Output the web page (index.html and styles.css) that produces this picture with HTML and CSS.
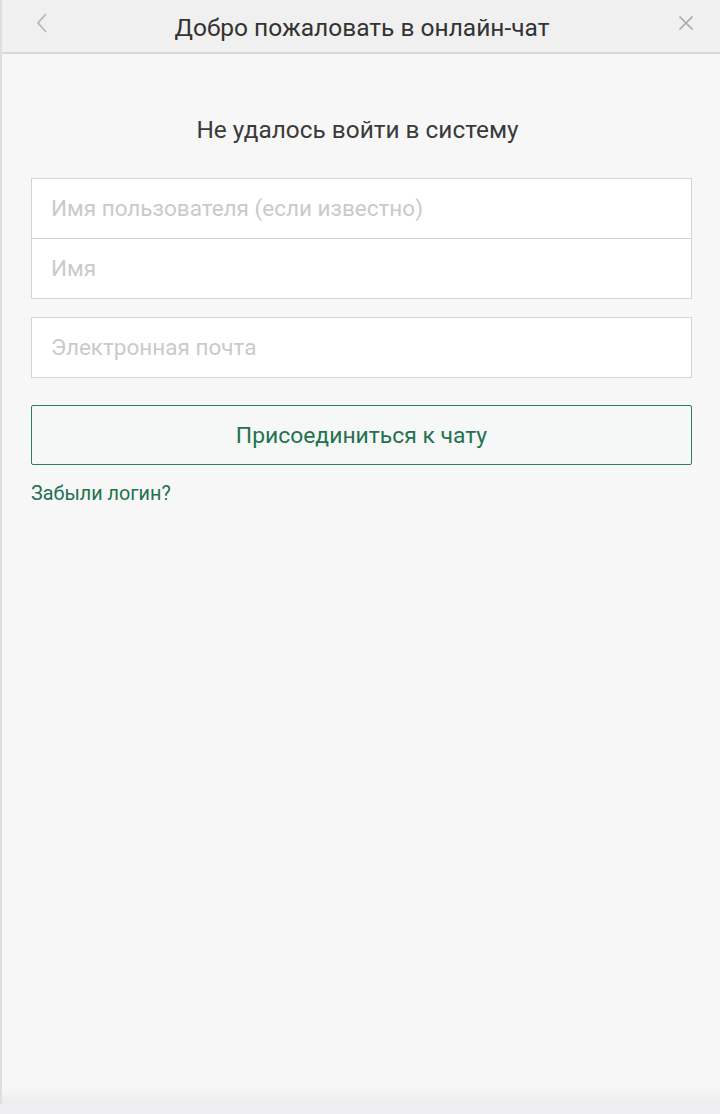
FILE: index.html
```html
<!DOCTYPE html>
<html lang="ru">
<head>
<meta charset="utf-8">
<link rel="stylesheet" href="styles.css">
</head>
<body>
<div class="app">
  <header class="header">
    <button class="icon-btn back" aria-label="Назад">
      <svg width="14" height="22" viewBox="0 0 14 22"><path d="M11 2 L3 11 L11 20" fill="none" stroke="#b5b5b5" stroke-width="1.6"/></svg>
    </button>
    <h1 class="title">Добро пожаловать в онлайн-чат</h1>
    <button class="icon-btn close" aria-label="Закрыть">
      <svg width="16" height="16" viewBox="0 0 16 16"><path d="M1.5 1.5 L14.5 14.5 M14.5 1.5 L1.5 14.5" fill="none" stroke="#a8a8a8" stroke-width="1.6"/></svg>
    </button>
  </header>
  <main class="main">
    <h2 class="subtitle">Не удалось войти в систему</h2>
    <div class="group first">
      <div class="field">Имя пользователя (если известно)</div>
      <div class="field joined">Имя</div>
    </div>
    <div class="group">
      <div class="field">Электронная почта</div>
    </div>
    <button class="join">Присоединиться к чату</button>
    <a class="forgot" href="#">Забыли логин?</a>
  </main>
  <div class="fade"></div>
</div>
<div class="strip"></div>
</body>
</html>
```
FILE: styles.css
```css
html, body {
  margin: 0;
  padding: 0;
  height: 1114px;
  overflow: hidden;
  background: #eeeef2;
  font-family: Roboto, "Noto Sans", sans-serif;
}
.app {
  height: 1104px;
  display: flex;
  flex-direction: column;
  background: #f7f7f7;
  border-left: 2px solid #dedede;
  box-sizing: border-box;
}
.header {
  height: 54px;
  flex: none;
  box-sizing: border-box;
  background: #f0f0f0;
  border-bottom: 2px solid #d9d9d9;
  display: flex;
  align-items: center;
  justify-content: space-between;
  padding: 0 24px 0 30px;
}
.icon-btn {
  background: none;
  border: 0;
  padding: 0;
  width: 20px;
  height: 24px;
  display: flex;
  align-items: center;
  justify-content: center;
  margin-top: -6px;
}
.title {
  margin: 0 4px 0 0;
  font-size: 24.5px;
  font-weight: 400;
  color: #333;
  margin-top: 2px;
}
.main {
  flex: 1;
  padding: 0 28px 0 29px;
  display: flex;
  flex-direction: column;
}
.subtitle {
  margin: 61px 0 0;
  padding-right: 8px;
  text-align: center;
  font-size: 24.4px;
  font-weight: 400;
  color: #3a3a3a;
  line-height: 30px;
  height: 30px;
}
.group {
  margin-top: 18px;
  border: 1px solid #d4d4d4;
  background: #fff;
  display: flex;
  flex-direction: column;
}
.group.first {
  margin-top: 33px;
}
.field {
  height: 59px;
  line-height: 59px;
  padding-left: 19px;
  font-size: 22.5px;
  color: #cacaca;
  box-sizing: border-box;
}
.field.joined {
  border-top: 1px solid #d4d4d4;
  height: 60px;
}
.join {
  margin-top: 27px;
  height: 60px;
  background: #f6f8f7;
  border: 1px solid #2e7d5b;
  border-radius: 2px;
  color: #23714f;
  font-family: inherit;
  font-size: 22.9px;
  font-weight: 400;
}
.forgot {
  margin-top: 17px;
  font-size: 19.8px;
  color: #23714f;
  text-decoration: none;
  align-self: flex-start;
  line-height: 24px;
}
.fade {
  height: 16px;
  flex: none;
  background: linear-gradient(#f7f7f7, #ececec);
}
.strip {
  height: 10px;
  background: #eeeef3;
}
```
